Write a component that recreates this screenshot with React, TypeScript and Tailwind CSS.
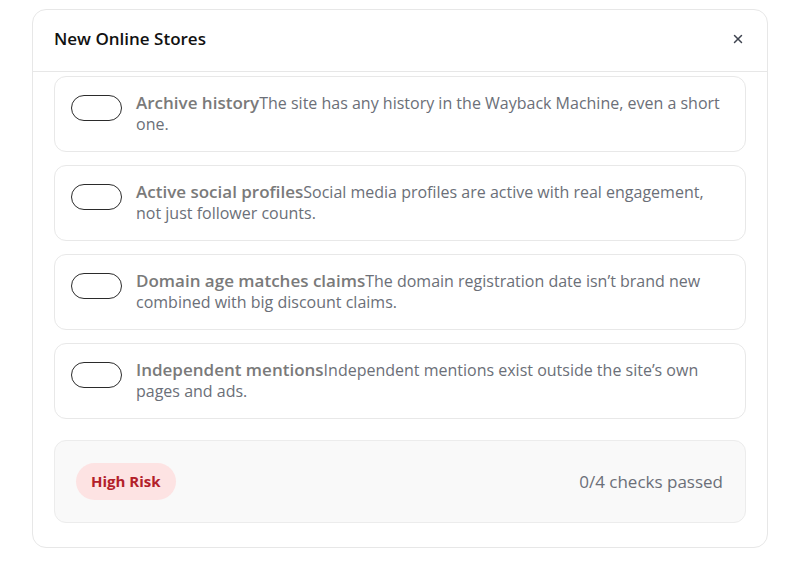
import { X } from "lucide-react";

const checks = [
  {
    title: "Archive history",
    desc: "The site has any history in the Wayback Machine, even a short one.",
  },
  {
    title: "Active social profiles",
    desc: "Social media profiles are active with real engagement, not just follower counts.",
  },
  {
    title: "Domain age matches claims",
    desc: "The domain registration date isn’t brand new combined with big discount claims.",
  },
  {
    title: "Independent mentions",
    desc: "Independent mentions exist outside the site’s own pages and ads.",
  },
];

export default function App() {
  return (
    <div className="min-h-[561px] bg-white pt-[9px] pl-[32px] font-['Open_Sans',sans-serif]">
      <div className="w-[736px] h-[539px] rounded-[14px] border border-[#e7e7e7] bg-white flex flex-col">
        <div className="flex items-center justify-between h-[62px] pb-[4px] pl-[21px] pr-[22px] border-b border-[#e7e7e7] shrink-0">
          <h2 className="text-[17px] font-semibold text-[#111]">New Online Stores</h2>
          <button className="text-[#3f4450]">
            <X size={14} strokeWidth={2.5} />
          </button>
        </div>

        <div className="px-[21px] pt-[4px]">
          <div className="flex flex-col gap-[13px]">
            {checks.map(c => (
              <label
                key={c.title}
                className="flex items-start gap-[14px] rounded-[12px] border border-[#e8e8e8] px-[16px] pt-[15px] pb-[16px] h-[76px]"
              >
                <span className="shrink-0 mt-[3px] w-[51px] h-[26px] rounded-full border-[1.5px] border-[#2b2b2b] bg-white" />
                <p className="text-[16px] leading-[21px] text-[#6b6f78]">
                  <span className="font-semibold text-[17px] text-[#7a7a7a]">{c.title}</span>
                  {c.desc}
                </p>
              </label>
            ))}
          </div>

          <div className="mt-[21px] h-[83px] rounded-[12px] border border-[#ececec] bg-[#f9f9f9] flex items-center justify-between pl-[21px] pr-[22px]">
            <span className="rounded-full bg-[#fde3e3] text-[#b3202a] text-[15px] font-bold px-[15px] h-[37px] flex items-center">
              High Risk
            </span>
            <span className="text-[17px] text-[#6b6f78]">0/4 checks passed</span>
          </div>
        </div>
      </div>
    </div>
  );
}
